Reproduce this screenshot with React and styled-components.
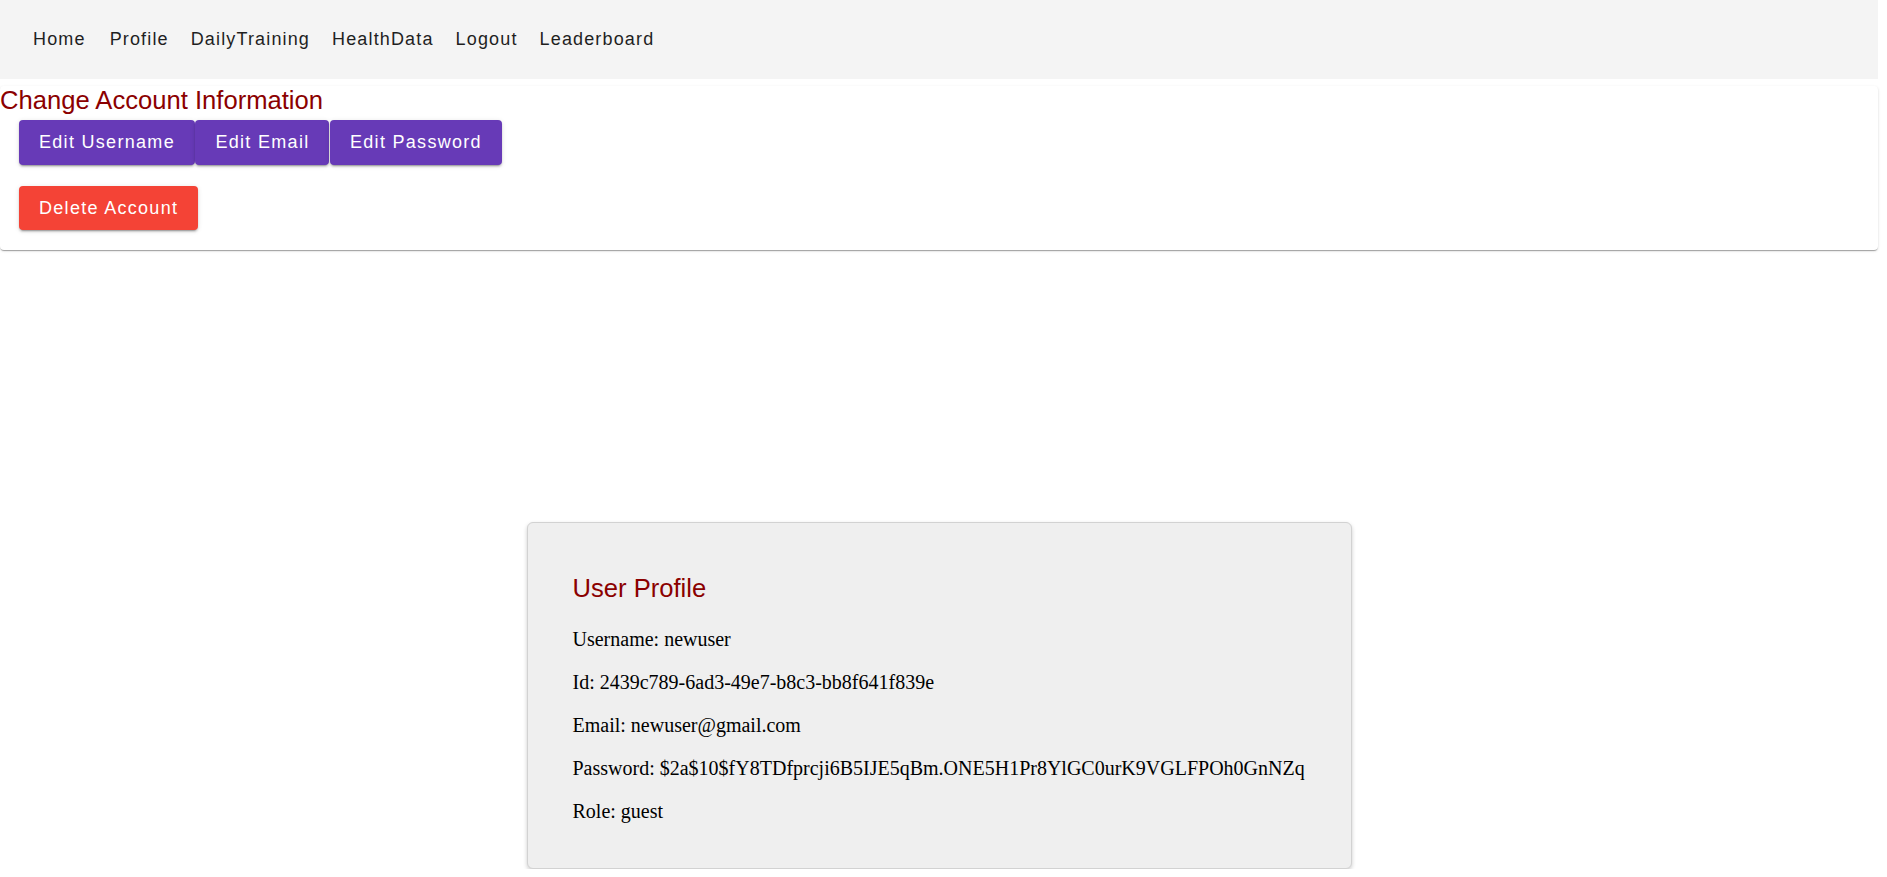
import React from "react";
import styled, { createGlobalStyle } from "styled-components";

const GlobalStyle = createGlobalStyle`
  body {
    margin: 0;
    background: #fff;
    font-family: "Liberation Serif", "Times New Roman", serif;
  }
`;

const Page = styled.div`
  margin-right: 9px;
`;

const NavBar = styled.nav`
  height: 79px;
  background: #f4f4f4;
  display: flex;
  align-items: center;
  gap: 22px;
  padding-left: 33px;
`;

const NavLink = styled.a`
  font-family: "Liberation Sans", Arial, sans-serif;
  font-size: 18px;
  letter-spacing: 1.15px;
  color: #1f1f1f;
  text-decoration: none;
  cursor: pointer;
  margin-right: ${(p) => (p.$wide ? "2px" : "0")};
`;

const AccountCard = styled.section`
  background: #fff;
  border-radius: 4px;
  box-shadow: 0px 2px 1px -1px rgba(0, 0, 0, 0.2),
    0px 1px 1px 0px rgba(0, 0, 0, 0.14), 0px 1px 3px 0px rgba(0, 0, 0, 0.12);
  padding-bottom: 20px;
`;

const Title = styled.h2`
  font-family: "Liberation Sans", Arial, sans-serif;
  font-weight: 400;
  font-size: 25.6px;
  line-height: 29px;
  color: #8b0000;
  margin: ${(p) => p.$margin};
`;

const ButtonRow = styled.div`
  display: flex;
  gap: 0.5px;
  margin: ${(p) => p.$margin};
`;

const Button = styled.button`
  font-family: "Liberation Sans", Arial, sans-serif;
  font-size: 18px;
  letter-spacing: 1.3px;
  line-height: 32.5px;
  padding: 6px 20px;
  border: none;
  border-radius: 4px;
  color: #fff;
  background: ${(p) => (p.$danger ? "#f44336" : "#673ab7")};
  box-shadow: 0px 3px 1px -2px rgba(0, 0, 0, 0.2),
    0px 2px 2px 0px rgba(0, 0, 0, 0.14), 0px 1px 5px 0px rgba(0, 0, 0, 0.12);
  cursor: pointer;
`;

const ProfileCard = styled.section`
  width: 825px;
  box-sizing: border-box;
  margin: 272px auto 0;
  padding: 51px 44px 45px 45px;
  background: #efefef;
  border: 1px solid #d2d2d2;
  border-radius: 6px;
  box-shadow: 0 2px 4px rgba(0, 0, 0, 0.2);
`;

const InfoList = styled.div`
  display: flex;
  flex-direction: column;
  gap: 20px;
`;

const InfoLine = styled.p`
  margin: 0;
  font-size: 20px;
  line-height: 23px;
  color: #000;
`;

const links = ["Home", "Profile", "DailyTraining", "HealthData", "Logout", "Leaderboard"];

const user = {
  username: "newuser",
  id: "2439c789-6ad3-49e7-b8c3-bb8f641f839e",
  email: "newuser@gmail.com",
  password: "$2a$10$fY8TDfprcji6B5IJE5qBm.ONE5H1Pr8YlGC0urK9VGLFPOh0GnNZq",
  role: "guest",
};

export default function App() {
  return (
    <Page>
      <GlobalStyle />
      <NavBar>
        {links.map((l) => (
          <NavLink key={l} $wide={l === "Home"}>
            {l}
          </NavLink>
        ))}
      </NavBar>

      <AccountCard>
        <Title $margin="7px 0 0">Change Account Information</Title>
        <ButtonRow $margin="5px 0 0 19px">
          <Button>Edit Username</Button>
          <Button>Edit Email</Button>
          <Button>Edit Password</Button>
        </ButtonRow>
        <ButtonRow $margin="21px 0 0 19px">
          <Button $danger>Delete Account</Button>
        </ButtonRow>
      </AccountCard>

      <ProfileCard>
        <Title $margin="0 0 25px">User Profile</Title>
        <InfoList>
          <InfoLine>Username: {user.username}</InfoLine>
          <InfoLine>Id: {user.id}</InfoLine>
          <InfoLine>Email: {user.email}</InfoLine>
          <InfoLine>Password: {user.password}</InfoLine>
          <InfoLine>Role: {user.role}</InfoLine>
        </InfoList>
      </ProfileCard>
    </Page>
  );
}
